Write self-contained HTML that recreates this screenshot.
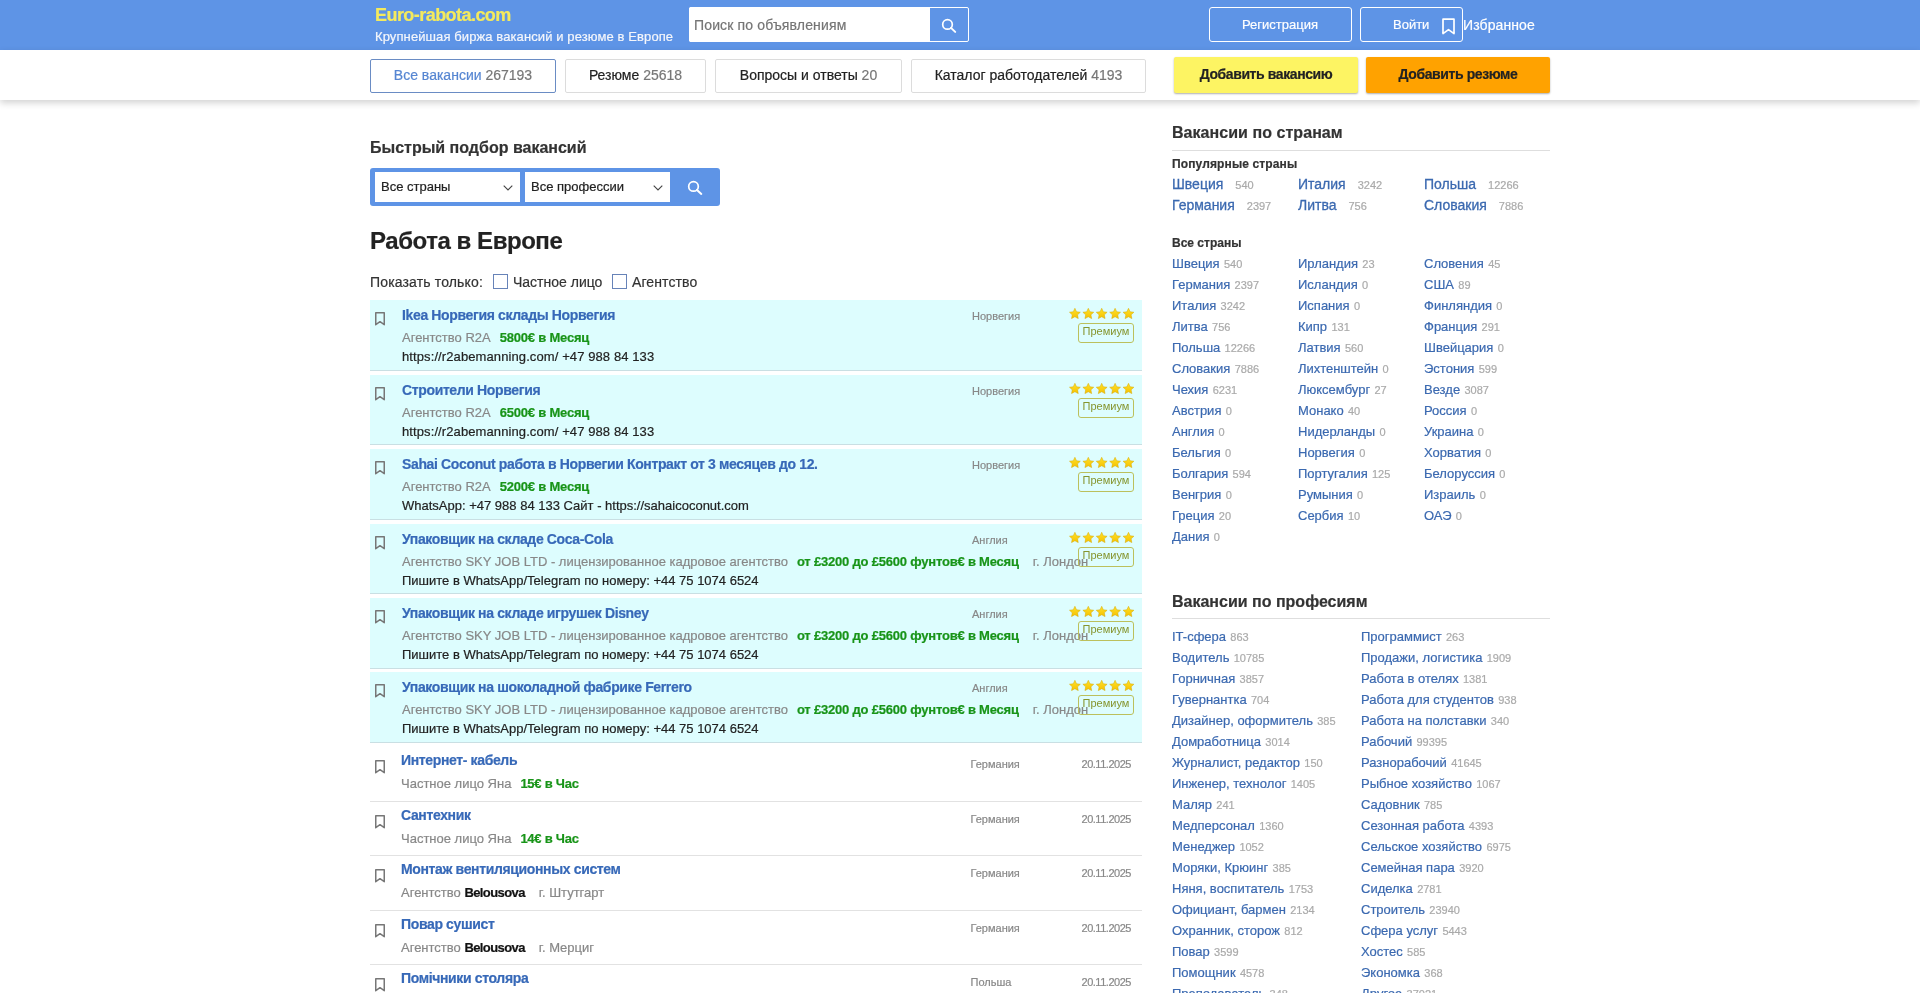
<!DOCTYPE html><html lang="ru"><head><meta charset="utf-8"><title>Euro-rabota.com</title><style>
*{box-sizing:border-box;margin:0;padding:0}
html,body{width:1920px;height:993px;overflow:hidden;background:#fff}
body{font-family:"Liberation Sans",sans-serif;color:#222;position:relative}
.t{position:absolute;white-space:nowrap;-webkit-text-stroke:0.2px currentColor}
.abs{position:absolute}
.hdr{position:absolute;left:0;top:0;width:1920px;height:50px;background:#5e94e6}
.nav{position:absolute;left:0;top:50px;width:1920px;height:50px;background:#fff;box-shadow:0 3px 7px rgba(0,0,0,.18)}
.tab{position:absolute;top:59px;height:34px;border:1px solid #dcdcdc;border-radius:2px;background:#fff}
.tab.act{border-color:#6a8cc4}
.num{color:#777}
.lnk{color:#3b69b0}
.cnt{color:#aaa}
.gr{color:#888}
.sal{color:#189418;font-weight:700}
.ttl{color:#3769b8;font-weight:700}
.prem{position:absolute;left:370px;width:772px;height:70px;background:#ddfdfe;border-bottom:1px solid #c9dfe3}
.norm{position:absolute;left:370px;width:772px;border-bottom:1px solid #e2e2e2}
.badge{position:absolute;left:1078px;width:56px;height:20px;border:1px solid #bcc05c;border-radius:3px;color:#86952e;font-size:11px;line-height:15px;text-align:center}
</style></head><body><div style="position:absolute;left:0;top:0;width:1920px;height:993px;will-change:transform"><div class="hdr"></div><div class="t " style="left:375px;top:6px;font-size:18px;line-height:18px;color:#f4ea5e;font-weight:700;letter-spacing:-0.55px">Euro-rabota.com</div><div class="t " style="left:375px;top:30px;font-size:13px;line-height:13px;color:#f4f6fb;letter-spacing:0.1px">Крупнейшая биржа вакансий и резюме в Европе</div><div class="abs" style="left:689px;top:7px;width:280px;height:35px;border:1px solid #fff;border-radius:2px;background:#5e94e6"></div><div class="abs" style="left:689px;top:7px;width:241px;height:35px;background:#fff;border-radius:2px 0 0 2px"></div><div class="t " style="left:694px;top:18px;font-size:14px;line-height:14px;color:#757575;letter-spacing:0.15px">Поиск по объявлениям</div><svg class="abs" style="left:941px;top:18px" width="16" height="16" viewBox="0 0 16 16"><circle cx="6.5" cy="6.4" r="4.8" fill="none" stroke="#fff" stroke-width="1.7"/><line x1="10" y1="9.9" x2="14.2" y2="13.9" stroke="#fff" stroke-width="2" stroke-linecap="round"/></svg><div class="abs" style="left:1209px;top:7px;width:143px;height:35px;border:1px solid #fff;border-radius:3px"></div><div class="t " style="left:1242px;top:18px;font-size:13px;line-height:13px;color:#fff">Регистрация</div><div class="abs" style="left:1360px;top:7px;width:103px;height:35px;border:1px solid #fff;border-radius:3px"></div><div class="t " style="left:1393px;top:18px;font-size:13px;line-height:13px;color:#fff">Войти</div><svg class="abs" style="left:1441px;top:18px" width="15" height="17" viewBox="0 0 15 17"><path d="M2 1.2H13V15.6L7.5 11.6L2 15.6Z" fill="none" stroke="#fff" stroke-width="1.7" stroke-linejoin="round"/></svg><div class="t " style="left:1463px;top:18px;font-size:14px;line-height:14px;color:#fff;letter-spacing:0.1px">Избранное</div><div class="nav"></div><div class="tab act" style="left:370px;width:186px"></div><div class="t" style="left:370px;top:68px;width:186px;text-align:center;font-size:14px;line-height:14px;color:#222"><span style="color:#5686d2">Все вакансии</span> <span class="num">267193</span></div><div class="tab" style="left:565px;width:141px"></div><div class="t" style="left:565px;top:68px;width:141px;text-align:center;font-size:14px;line-height:14px;color:#222">Резюме <span class="num">25618</span></div><div class="tab" style="left:715px;width:187px"></div><div class="t" style="left:715px;top:68px;width:187px;text-align:center;font-size:14px;line-height:14px;color:#222">Вопросы и ответы <span class="num">20</span></div><div class="tab" style="left:911px;width:235px"></div><div class="t" style="left:911px;top:68px;width:235px;text-align:center;font-size:14px;line-height:14px;color:#222">Каталог работодателей <span class="num">4193</span></div><div class="abs" style="left:1174px;top:57px;width:184px;height:36px;background:#fdf463;border-radius:2px;box-shadow:0 1px 2px rgba(0,0,0,.32)"></div><div class="t" style="left:1174px;top:67px;width:184px;text-align:center;font-size:14px;line-height:14px;font-weight:700;letter-spacing:-0.4px;color:#222">Добавить вакансию</div><div class="abs" style="left:1366px;top:57px;width:184px;height:36px;background:#ffa200;border-radius:2px;box-shadow:0 1px 2px rgba(0,0,0,.32)"></div><div class="t" style="left:1366px;top:67px;width:184px;text-align:center;font-size:14px;line-height:14px;font-weight:700;letter-spacing:-0.4px;color:#222">Добавить резюме</div><div class="t " style="left:370px;top:140px;font-size:16px;line-height:16px;font-weight:700;color:#333">Быстрый подбор вакансий</div><div class="abs" style="left:370px;top:168px;width:350px;height:38px;background:#5e94e6;border-radius:3px"></div><div class="abs" style="left:375px;top:172px;width:145px;height:30px;background:#fff"></div><div class="abs" style="left:525px;top:172px;width:145px;height:30px;background:#fff"></div><div class="t " style="left:381px;top:180px;font-size:13px;line-height:13px;color:#222">Все страны</div><div class="t " style="left:531px;top:180px;font-size:13px;line-height:13px;color:#222">Все профессии</div><svg class="abs" style="left:502.5px;top:184.7px" width="10" height="6" viewBox="0 0 10 6"><path d="M0.7 0.7L5 5L9.3 0.7" fill="none" stroke="#444" stroke-width="1.1"/></svg><svg class="abs" style="left:652.5px;top:184.7px" width="10" height="6" viewBox="0 0 10 6"><path d="M0.7 0.7L5 5L9.3 0.7" fill="none" stroke="#444" stroke-width="1.1"/></svg><svg class="abs" style="left:687px;top:180px" width="16" height="16" viewBox="0 0 16 16"><circle cx="6.5" cy="6.4" r="4.8" fill="none" stroke="#fff" stroke-width="1.7"/><line x1="10" y1="9.9" x2="14.3" y2="13.9" stroke="#fff" stroke-width="2" stroke-linecap="round"/></svg><div class="t " style="left:370px;top:229px;font-size:24px;line-height:24px;font-weight:700;color:#222;letter-spacing:-0.45px">Работа в Европе</div><div class="t " style="left:370px;top:274.5px;font-size:14px;line-height:14px;color:#333;letter-spacing:0.15px">Показать только:</div><div class="abs" style="left:493px;top:274px;width:15px;height:15px;border:1px solid #6783b8;background:#fff"></div><div class="t " style="left:513px;top:274.5px;font-size:14px;line-height:14px;color:#333">Частное лицо</div><div class="abs" style="left:612px;top:274px;width:15px;height:15px;border:1px solid #6783b8;background:#fff"></div><div class="t " style="left:632px;top:274.5px;font-size:14px;line-height:14px;color:#333;letter-spacing:0.1px">Агентство</div><svg width="0" height="0" style="position:absolute"><defs><linearGradient id="sg" x1="0" y1="0" x2="0" y2="1"><stop offset="0" stop-color="#ffe22a"/><stop offset="1" stop-color="#f5c000"/></linearGradient></defs></svg><div class="prem" style="top:300px;height:71px"></div><svg class="abs" style="left:374px;top:311.5px" width="12" height="15" viewBox="0 0 12 15"><path d="M1.75 0.75H10.25V12.7L6 9.7L1.75 12.7Z" fill="none" stroke="#777" stroke-width="1.5" stroke-linejoin="round"/></svg><div class="t ttl" style="left:402px;top:308px;font-size:14px;line-height:14px;letter-spacing:-0.36px">Ikea Норвегия склады Норвегия</div><div class="t" style="left:402px;top:331px;font-size:13px;line-height:13px"><span class="gr">Агентство R2A</span><span class="sal" style="margin-left:9px;letter-spacing:-0.2px">5800€ в Месяц</span></div><div class="t " style="left:402px;top:349.8px;font-size:13px;line-height:13px;color:#222;letter-spacing:0.1px">https://r2abemanning.com/ +47 988 84 133</div><div class="t gr" style="left:972px;top:311px;font-size:11px;line-height:11px;">Норвегия</div><svg class="abs" style="left:1069px;top:307.7px" width="66" height="11" viewBox="0 0 66 11"><g transform="translate(0.0,0)"><path d="M5.90 0.30L7.52 3.78L11.32 4.24L8.52 6.85L9.25 10.61L5.90 8.75L2.55 10.61L3.28 6.85L0.48 4.24L4.28 3.78Z" fill="url(#sg)" stroke="#d4a800" stroke-width="0.5" stroke-linejoin="round"/></g><g transform="translate(13.4,0)"><path d="M5.90 0.30L7.52 3.78L11.32 4.24L8.52 6.85L9.25 10.61L5.90 8.75L2.55 10.61L3.28 6.85L0.48 4.24L4.28 3.78Z" fill="url(#sg)" stroke="#d4a800" stroke-width="0.5" stroke-linejoin="round"/></g><g transform="translate(26.8,0)"><path d="M5.90 0.30L7.52 3.78L11.32 4.24L8.52 6.85L9.25 10.61L5.90 8.75L2.55 10.61L3.28 6.85L0.48 4.24L4.28 3.78Z" fill="url(#sg)" stroke="#d4a800" stroke-width="0.5" stroke-linejoin="round"/></g><g transform="translate(40.2,0)"><path d="M5.90 0.30L7.52 3.78L11.32 4.24L8.52 6.85L9.25 10.61L5.90 8.75L2.55 10.61L3.28 6.85L0.48 4.24L4.28 3.78Z" fill="url(#sg)" stroke="#d4a800" stroke-width="0.5" stroke-linejoin="round"/></g><g transform="translate(53.6,0)"><path d="M5.90 0.30L7.52 3.78L11.32 4.24L8.52 6.85L9.25 10.61L5.90 8.75L2.55 10.61L3.28 6.85L0.48 4.24L4.28 3.78Z" fill="url(#sg)" stroke="#d4a800" stroke-width="0.5" stroke-linejoin="round"/></g></svg><div class="badge" style="top:323px">Премиум</div><div class="prem" style="top:375px;height:70px"></div><svg class="abs" style="left:374px;top:386.5px" width="12" height="15" viewBox="0 0 12 15"><path d="M1.75 0.75H10.25V12.7L6 9.7L1.75 12.7Z" fill="none" stroke="#777" stroke-width="1.5" stroke-linejoin="round"/></svg><div class="t ttl" style="left:402px;top:383px;font-size:14px;line-height:14px;letter-spacing:-0.36px">Строители Норвегия</div><div class="t" style="left:402px;top:406px;font-size:13px;line-height:13px"><span class="gr">Агентство R2A</span><span class="sal" style="margin-left:9px;letter-spacing:-0.2px">6500€ в Месяц</span></div><div class="t " style="left:402px;top:424.8px;font-size:13px;line-height:13px;color:#222;letter-spacing:0.1px">https://r2abemanning.com/ +47 988 84 133</div><div class="t gr" style="left:972px;top:386px;font-size:11px;line-height:11px;">Норвегия</div><svg class="abs" style="left:1069px;top:382.7px" width="66" height="11" viewBox="0 0 66 11"><g transform="translate(0.0,0)"><path d="M5.90 0.30L7.52 3.78L11.32 4.24L8.52 6.85L9.25 10.61L5.90 8.75L2.55 10.61L3.28 6.85L0.48 4.24L4.28 3.78Z" fill="url(#sg)" stroke="#d4a800" stroke-width="0.5" stroke-linejoin="round"/></g><g transform="translate(13.4,0)"><path d="M5.90 0.30L7.52 3.78L11.32 4.24L8.52 6.85L9.25 10.61L5.90 8.75L2.55 10.61L3.28 6.85L0.48 4.24L4.28 3.78Z" fill="url(#sg)" stroke="#d4a800" stroke-width="0.5" stroke-linejoin="round"/></g><g transform="translate(26.8,0)"><path d="M5.90 0.30L7.52 3.78L11.32 4.24L8.52 6.85L9.25 10.61L5.90 8.75L2.55 10.61L3.28 6.85L0.48 4.24L4.28 3.78Z" fill="url(#sg)" stroke="#d4a800" stroke-width="0.5" stroke-linejoin="round"/></g><g transform="translate(40.2,0)"><path d="M5.90 0.30L7.52 3.78L11.32 4.24L8.52 6.85L9.25 10.61L5.90 8.75L2.55 10.61L3.28 6.85L0.48 4.24L4.28 3.78Z" fill="url(#sg)" stroke="#d4a800" stroke-width="0.5" stroke-linejoin="round"/></g><g transform="translate(53.6,0)"><path d="M5.90 0.30L7.52 3.78L11.32 4.24L8.52 6.85L9.25 10.61L5.90 8.75L2.55 10.61L3.28 6.85L0.48 4.24L4.28 3.78Z" fill="url(#sg)" stroke="#d4a800" stroke-width="0.5" stroke-linejoin="round"/></g></svg><div class="badge" style="top:398px">Премиум</div><div class="prem" style="top:449px;height:71px"></div><svg class="abs" style="left:374px;top:460.5px" width="12" height="15" viewBox="0 0 12 15"><path d="M1.75 0.75H10.25V12.7L6 9.7L1.75 12.7Z" fill="none" stroke="#777" stroke-width="1.5" stroke-linejoin="round"/></svg><div class="t ttl" style="left:402px;top:457px;font-size:14px;line-height:14px;letter-spacing:-0.36px">Sahai Coconut работа в Норвегии Контракт от 3 месяцев до 12.</div><div class="t" style="left:402px;top:480px;font-size:13px;line-height:13px"><span class="gr">Агентство R2A</span><span class="sal" style="margin-left:9px;letter-spacing:-0.2px">5200€ в Месяц</span></div><div class="t " style="left:402px;top:498.8px;font-size:13px;line-height:13px;color:#222;letter-spacing:0px">WhatsApp: +47 988 84 133 Сайт - https://sahaicoconut.com</div><div class="t gr" style="left:972px;top:460px;font-size:11px;line-height:11px;">Норвегия</div><svg class="abs" style="left:1069px;top:456.7px" width="66" height="11" viewBox="0 0 66 11"><g transform="translate(0.0,0)"><path d="M5.90 0.30L7.52 3.78L11.32 4.24L8.52 6.85L9.25 10.61L5.90 8.75L2.55 10.61L3.28 6.85L0.48 4.24L4.28 3.78Z" fill="url(#sg)" stroke="#d4a800" stroke-width="0.5" stroke-linejoin="round"/></g><g transform="translate(13.4,0)"><path d="M5.90 0.30L7.52 3.78L11.32 4.24L8.52 6.85L9.25 10.61L5.90 8.75L2.55 10.61L3.28 6.85L0.48 4.24L4.28 3.78Z" fill="url(#sg)" stroke="#d4a800" stroke-width="0.5" stroke-linejoin="round"/></g><g transform="translate(26.8,0)"><path d="M5.90 0.30L7.52 3.78L11.32 4.24L8.52 6.85L9.25 10.61L5.90 8.75L2.55 10.61L3.28 6.85L0.48 4.24L4.28 3.78Z" fill="url(#sg)" stroke="#d4a800" stroke-width="0.5" stroke-linejoin="round"/></g><g transform="translate(40.2,0)"><path d="M5.90 0.30L7.52 3.78L11.32 4.24L8.52 6.85L9.25 10.61L5.90 8.75L2.55 10.61L3.28 6.85L0.48 4.24L4.28 3.78Z" fill="url(#sg)" stroke="#d4a800" stroke-width="0.5" stroke-linejoin="round"/></g><g transform="translate(53.6,0)"><path d="M5.90 0.30L7.52 3.78L11.32 4.24L8.52 6.85L9.25 10.61L5.90 8.75L2.55 10.61L3.28 6.85L0.48 4.24L4.28 3.78Z" fill="url(#sg)" stroke="#d4a800" stroke-width="0.5" stroke-linejoin="round"/></g></svg><div class="badge" style="top:472px">Премиум</div><div class="prem" style="top:524px;height:70px"></div><svg class="abs" style="left:374px;top:535.5px" width="12" height="15" viewBox="0 0 12 15"><path d="M1.75 0.75H10.25V12.7L6 9.7L1.75 12.7Z" fill="none" stroke="#777" stroke-width="1.5" stroke-linejoin="round"/></svg><div class="t ttl" style="left:402px;top:532px;font-size:14px;line-height:14px;letter-spacing:-0.36px">Упаковщик на складе Coca-Cola</div><div class="t" style="left:402px;top:555px;font-size:13px;line-height:13px"><span class="gr">Агентство SKY JOB LTD - лицензированное кадровое агентство</span><span class="sal" style="margin-left:9px;letter-spacing:-0.2px">от £3200 до £5600 фунтов€ в Месяц</span><span class="gr" style="margin-left:14px">г. Лондон</span></div><div class="t " style="left:402px;top:573.8px;font-size:13px;line-height:13px;color:#222;letter-spacing:0px">Пишите в WhatsApp/Telegram по номеру: +44 75 1074 6524</div><div class="t gr" style="left:972px;top:535px;font-size:11px;line-height:11px;">Англия</div><svg class="abs" style="left:1069px;top:531.7px" width="66" height="11" viewBox="0 0 66 11"><g transform="translate(0.0,0)"><path d="M5.90 0.30L7.52 3.78L11.32 4.24L8.52 6.85L9.25 10.61L5.90 8.75L2.55 10.61L3.28 6.85L0.48 4.24L4.28 3.78Z" fill="url(#sg)" stroke="#d4a800" stroke-width="0.5" stroke-linejoin="round"/></g><g transform="translate(13.4,0)"><path d="M5.90 0.30L7.52 3.78L11.32 4.24L8.52 6.85L9.25 10.61L5.90 8.75L2.55 10.61L3.28 6.85L0.48 4.24L4.28 3.78Z" fill="url(#sg)" stroke="#d4a800" stroke-width="0.5" stroke-linejoin="round"/></g><g transform="translate(26.8,0)"><path d="M5.90 0.30L7.52 3.78L11.32 4.24L8.52 6.85L9.25 10.61L5.90 8.75L2.55 10.61L3.28 6.85L0.48 4.24L4.28 3.78Z" fill="url(#sg)" stroke="#d4a800" stroke-width="0.5" stroke-linejoin="round"/></g><g transform="translate(40.2,0)"><path d="M5.90 0.30L7.52 3.78L11.32 4.24L8.52 6.85L9.25 10.61L5.90 8.75L2.55 10.61L3.28 6.85L0.48 4.24L4.28 3.78Z" fill="url(#sg)" stroke="#d4a800" stroke-width="0.5" stroke-linejoin="round"/></g><g transform="translate(53.6,0)"><path d="M5.90 0.30L7.52 3.78L11.32 4.24L8.52 6.85L9.25 10.61L5.90 8.75L2.55 10.61L3.28 6.85L0.48 4.24L4.28 3.78Z" fill="url(#sg)" stroke="#d4a800" stroke-width="0.5" stroke-linejoin="round"/></g></svg><div class="badge" style="top:547px">Премиум</div><div class="prem" style="top:598px;height:71px"></div><svg class="abs" style="left:374px;top:609.5px" width="12" height="15" viewBox="0 0 12 15"><path d="M1.75 0.75H10.25V12.7L6 9.7L1.75 12.7Z" fill="none" stroke="#777" stroke-width="1.5" stroke-linejoin="round"/></svg><div class="t ttl" style="left:402px;top:606px;font-size:14px;line-height:14px;letter-spacing:-0.36px">Упаковщик на складе игрушек Disney</div><div class="t" style="left:402px;top:629px;font-size:13px;line-height:13px"><span class="gr">Агентство SKY JOB LTD - лицензированное кадровое агентство</span><span class="sal" style="margin-left:9px;letter-spacing:-0.2px">от £3200 до £5600 фунтов€ в Месяц</span><span class="gr" style="margin-left:14px">г. Лондон</span></div><div class="t " style="left:402px;top:647.8px;font-size:13px;line-height:13px;color:#222;letter-spacing:0px">Пишите в WhatsApp/Telegram по номеру: +44 75 1074 6524</div><div class="t gr" style="left:972px;top:609px;font-size:11px;line-height:11px;">Англия</div><svg class="abs" style="left:1069px;top:605.7px" width="66" height="11" viewBox="0 0 66 11"><g transform="translate(0.0,0)"><path d="M5.90 0.30L7.52 3.78L11.32 4.24L8.52 6.85L9.25 10.61L5.90 8.75L2.55 10.61L3.28 6.85L0.48 4.24L4.28 3.78Z" fill="url(#sg)" stroke="#d4a800" stroke-width="0.5" stroke-linejoin="round"/></g><g transform="translate(13.4,0)"><path d="M5.90 0.30L7.52 3.78L11.32 4.24L8.52 6.85L9.25 10.61L5.90 8.75L2.55 10.61L3.28 6.85L0.48 4.24L4.28 3.78Z" fill="url(#sg)" stroke="#d4a800" stroke-width="0.5" stroke-linejoin="round"/></g><g transform="translate(26.8,0)"><path d="M5.90 0.30L7.52 3.78L11.32 4.24L8.52 6.85L9.25 10.61L5.90 8.75L2.55 10.61L3.28 6.85L0.48 4.24L4.28 3.78Z" fill="url(#sg)" stroke="#d4a800" stroke-width="0.5" stroke-linejoin="round"/></g><g transform="translate(40.2,0)"><path d="M5.90 0.30L7.52 3.78L11.32 4.24L8.52 6.85L9.25 10.61L5.90 8.75L2.55 10.61L3.28 6.85L0.48 4.24L4.28 3.78Z" fill="url(#sg)" stroke="#d4a800" stroke-width="0.5" stroke-linejoin="round"/></g><g transform="translate(53.6,0)"><path d="M5.90 0.30L7.52 3.78L11.32 4.24L8.52 6.85L9.25 10.61L5.90 8.75L2.55 10.61L3.28 6.85L0.48 4.24L4.28 3.78Z" fill="url(#sg)" stroke="#d4a800" stroke-width="0.5" stroke-linejoin="round"/></g></svg><div class="badge" style="top:621px">Премиум</div><div class="prem" style="top:672px;height:71px"></div><svg class="abs" style="left:374px;top:683.5px" width="12" height="15" viewBox="0 0 12 15"><path d="M1.75 0.75H10.25V12.7L6 9.7L1.75 12.7Z" fill="none" stroke="#777" stroke-width="1.5" stroke-linejoin="round"/></svg><div class="t ttl" style="left:402px;top:680px;font-size:14px;line-height:14px;letter-spacing:-0.36px">Упаковщик на шоколадной фабрике Ferrero</div><div class="t" style="left:402px;top:703px;font-size:13px;line-height:13px"><span class="gr">Агентство SKY JOB LTD - лицензированное кадровое агентство</span><span class="sal" style="margin-left:9px;letter-spacing:-0.2px">от £3200 до £5600 фунтов€ в Месяц</span><span class="gr" style="margin-left:14px">г. Лондон</span></div><div class="t " style="left:402px;top:721.8px;font-size:13px;line-height:13px;color:#222;letter-spacing:0px">Пишите в WhatsApp/Telegram по номеру: +44 75 1074 6524</div><div class="t gr" style="left:972px;top:683px;font-size:11px;line-height:11px;">Англия</div><svg class="abs" style="left:1069px;top:679.7px" width="66" height="11" viewBox="0 0 66 11"><g transform="translate(0.0,0)"><path d="M5.90 0.30L7.52 3.78L11.32 4.24L8.52 6.85L9.25 10.61L5.90 8.75L2.55 10.61L3.28 6.85L0.48 4.24L4.28 3.78Z" fill="url(#sg)" stroke="#d4a800" stroke-width="0.5" stroke-linejoin="round"/></g><g transform="translate(13.4,0)"><path d="M5.90 0.30L7.52 3.78L11.32 4.24L8.52 6.85L9.25 10.61L5.90 8.75L2.55 10.61L3.28 6.85L0.48 4.24L4.28 3.78Z" fill="url(#sg)" stroke="#d4a800" stroke-width="0.5" stroke-linejoin="round"/></g><g transform="translate(26.8,0)"><path d="M5.90 0.30L7.52 3.78L11.32 4.24L8.52 6.85L9.25 10.61L5.90 8.75L2.55 10.61L3.28 6.85L0.48 4.24L4.28 3.78Z" fill="url(#sg)" stroke="#d4a800" stroke-width="0.5" stroke-linejoin="round"/></g><g transform="translate(40.2,0)"><path d="M5.90 0.30L7.52 3.78L11.32 4.24L8.52 6.85L9.25 10.61L5.90 8.75L2.55 10.61L3.28 6.85L0.48 4.24L4.28 3.78Z" fill="url(#sg)" stroke="#d4a800" stroke-width="0.5" stroke-linejoin="round"/></g><g transform="translate(53.6,0)"><path d="M5.90 0.30L7.52 3.78L11.32 4.24L8.52 6.85L9.25 10.61L5.90 8.75L2.55 10.61L3.28 6.85L0.48 4.24L4.28 3.78Z" fill="url(#sg)" stroke="#d4a800" stroke-width="0.5" stroke-linejoin="round"/></g></svg><div class="badge" style="top:695px">Премиум</div><div class="norm" style="top:747px;height:55px"></div><svg class="abs" style="left:374px;top:759.5px" width="12" height="15" viewBox="0 0 12 15"><path d="M1.75 0.75H10.25V12.7L6 9.7L1.75 12.7Z" fill="none" stroke="#777" stroke-width="1.5" stroke-linejoin="round"/></svg><div class="t ttl" style="left:401px;top:752.9px;font-size:14px;line-height:14px;letter-spacing:-0.36px">Интернет- кабель</div><div class="t" style="left:401px;top:777px;font-size:13px;line-height:13px"><span class="gr">Частное лицо Яна</span><span class="sal" style="margin-left:9px;letter-spacing:-0.25px">15€ в Час</span></div><div class="t gr" style="left:970.5px;top:758.8px;font-size:11px;line-height:11px;">Германия</div><div class="t gr" style="left:1081.5px;top:758.8px;font-size:11px;line-height:11px;letter-spacing:-0.48px">20.11.2025</div><div class="norm" style="top:802px;height:54px"></div><svg class="abs" style="left:374px;top:814.5px" width="12" height="15" viewBox="0 0 12 15"><path d="M1.75 0.75H10.25V12.7L6 9.7L1.75 12.7Z" fill="none" stroke="#777" stroke-width="1.5" stroke-linejoin="round"/></svg><div class="t ttl" style="left:401px;top:807.9px;font-size:14px;line-height:14px;letter-spacing:-0.36px">Сантехник</div><div class="t" style="left:401px;top:832px;font-size:13px;line-height:13px"><span class="gr">Частное лицо Яна</span><span class="sal" style="margin-left:9px;letter-spacing:-0.25px">14€ в Час</span></div><div class="t gr" style="left:970.5px;top:813.8px;font-size:11px;line-height:11px;">Германия</div><div class="t gr" style="left:1081.5px;top:813.8px;font-size:11px;line-height:11px;letter-spacing:-0.48px">20.11.2025</div><div class="norm" style="top:856px;height:55px"></div><svg class="abs" style="left:374px;top:868.5px" width="12" height="15" viewBox="0 0 12 15"><path d="M1.75 0.75H10.25V12.7L6 9.7L1.75 12.7Z" fill="none" stroke="#777" stroke-width="1.5" stroke-linejoin="round"/></svg><div class="t ttl" style="left:401px;top:861.9px;font-size:14px;line-height:14px;letter-spacing:-0.36px">Монтаж вентиляционных систем</div><div class="t" style="left:401px;top:886px;font-size:13px;line-height:13px"><span class="gr">Агентство</span> <b style="color:#111;letter-spacing:-0.6px">Belousova</b><span class="gr" style="margin-left:14px">г. Штутгарт</span></div><div class="t gr" style="left:970.5px;top:867.8px;font-size:11px;line-height:11px;">Германия</div><div class="t gr" style="left:1081.5px;top:867.8px;font-size:11px;line-height:11px;letter-spacing:-0.48px">20.11.2025</div><div class="norm" style="top:911px;height:54px"></div><svg class="abs" style="left:374px;top:923.5px" width="12" height="15" viewBox="0 0 12 15"><path d="M1.75 0.75H10.25V12.7L6 9.7L1.75 12.7Z" fill="none" stroke="#777" stroke-width="1.5" stroke-linejoin="round"/></svg><div class="t ttl" style="left:401px;top:916.9px;font-size:14px;line-height:14px;letter-spacing:-0.36px">Повар сушист</div><div class="t" style="left:401px;top:941px;font-size:13px;line-height:13px"><span class="gr">Агентство</span> <b style="color:#111;letter-spacing:-0.6px">Belousova</b><span class="gr" style="margin-left:14px">г. Мерциг</span></div><div class="t gr" style="left:970.5px;top:922.8px;font-size:11px;line-height:11px;">Германия</div><div class="t gr" style="left:1081.5px;top:922.8px;font-size:11px;line-height:11px;letter-spacing:-0.48px">20.11.2025</div><div class="norm" style="top:965px;height:55px"></div><svg class="abs" style="left:374px;top:977.5px" width="12" height="15" viewBox="0 0 12 15"><path d="M1.75 0.75H10.25V12.7L6 9.7L1.75 12.7Z" fill="none" stroke="#777" stroke-width="1.5" stroke-linejoin="round"/></svg><div class="t ttl" style="left:401px;top:970.9px;font-size:14px;line-height:14px;letter-spacing:-0.36px">Помічники столяра</div><div class="t gr" style="left:970.5px;top:976.8px;font-size:11px;line-height:11px;">Польша</div><div class="t gr" style="left:1081.5px;top:976.8px;font-size:11px;line-height:11px;letter-spacing:-0.48px">20.11.2025</div><div class="t " style="left:1172px;top:125px;font-size:16px;line-height:16px;font-weight:700;color:#333;letter-spacing:0.05px">Вакансии по странам</div><div class="abs" style="left:1172px;top:150px;width:378px;height:1px;background:#dedede"></div><div class="t " style="left:1172px;top:158px;font-size:12px;line-height:12px;font-weight:700;color:#333;letter-spacing:0.12px">Популярные страны</div><div class="t" style="left:1172px;top:176.6px;font-size:14px;line-height:14px"><span class="lnk" style="-webkit-text-stroke:0.3px #3b69b0">Швеция</span><span class="cnt" style="font-size:11px;margin-left:12px">540</span></div><div class="t" style="left:1298px;top:176.6px;font-size:14px;line-height:14px"><span class="lnk" style="-webkit-text-stroke:0.3px #3b69b0">Италия</span><span class="cnt" style="font-size:11px;margin-left:12px">3242</span></div><div class="t" style="left:1424px;top:176.6px;font-size:14px;line-height:14px"><span class="lnk" style="-webkit-text-stroke:0.3px #3b69b0">Польша</span><span class="cnt" style="font-size:11px;margin-left:12px">12266</span></div><div class="t" style="left:1172px;top:197.9px;font-size:14px;line-height:14px"><span class="lnk" style="-webkit-text-stroke:0.3px #3b69b0">Германия</span><span class="cnt" style="font-size:11px;margin-left:12px">2397</span></div><div class="t" style="left:1298px;top:197.9px;font-size:14px;line-height:14px"><span class="lnk" style="-webkit-text-stroke:0.3px #3b69b0">Литва</span><span class="cnt" style="font-size:11px;margin-left:12px">756</span></div><div class="t" style="left:1424px;top:197.9px;font-size:14px;line-height:14px"><span class="lnk" style="-webkit-text-stroke:0.3px #3b69b0">Словакия</span><span class="cnt" style="font-size:11px;margin-left:12px">7886</span></div><div class="t " style="left:1172px;top:237px;font-size:12px;line-height:12px;font-weight:700;color:#333">Все страны</div><div class="t" style="left:1172px;top:257px;font-size:13px;line-height:13px"><span class="lnk" style="">Швеция</span><span class="cnt" style="font-size:11px;margin-left:4.3px">540</span></div><div class="t" style="left:1172px;top:278px;font-size:13px;line-height:13px"><span class="lnk" style="">Германия</span><span class="cnt" style="font-size:11px;margin-left:4.3px">2397</span></div><div class="t" style="left:1172px;top:299px;font-size:13px;line-height:13px"><span class="lnk" style="">Италия</span><span class="cnt" style="font-size:11px;margin-left:4.3px">3242</span></div><div class="t" style="left:1172px;top:320px;font-size:13px;line-height:13px"><span class="lnk" style="">Литва</span><span class="cnt" style="font-size:11px;margin-left:4.3px">756</span></div><div class="t" style="left:1172px;top:341px;font-size:13px;line-height:13px"><span class="lnk" style="">Польша</span><span class="cnt" style="font-size:11px;margin-left:4.3px">12266</span></div><div class="t" style="left:1172px;top:362px;font-size:13px;line-height:13px"><span class="lnk" style="">Словакия</span><span class="cnt" style="font-size:11px;margin-left:4.3px">7886</span></div><div class="t" style="left:1172px;top:383px;font-size:13px;line-height:13px"><span class="lnk" style="">Чехия</span><span class="cnt" style="font-size:11px;margin-left:4.3px">6231</span></div><div class="t" style="left:1172px;top:404px;font-size:13px;line-height:13px"><span class="lnk" style="">Австрия</span><span class="cnt" style="font-size:11px;margin-left:4.3px">0</span></div><div class="t" style="left:1172px;top:425px;font-size:13px;line-height:13px"><span class="lnk" style="">Англия</span><span class="cnt" style="font-size:11px;margin-left:4.3px">0</span></div><div class="t" style="left:1172px;top:446px;font-size:13px;line-height:13px"><span class="lnk" style="">Бельгия</span><span class="cnt" style="font-size:11px;margin-left:4.3px">0</span></div><div class="t" style="left:1172px;top:467px;font-size:13px;line-height:13px"><span class="lnk" style="">Болгария</span><span class="cnt" style="font-size:11px;margin-left:4.3px">594</span></div><div class="t" style="left:1172px;top:488px;font-size:13px;line-height:13px"><span class="lnk" style="">Венгрия</span><span class="cnt" style="font-size:11px;margin-left:4.3px">0</span></div><div class="t" style="left:1172px;top:509px;font-size:13px;line-height:13px"><span class="lnk" style="">Греция</span><span class="cnt" style="font-size:11px;margin-left:4.3px">20</span></div><div class="t" style="left:1172px;top:530px;font-size:13px;line-height:13px"><span class="lnk" style="">Дания</span><span class="cnt" style="font-size:11px;margin-left:4.3px">0</span></div><div class="t" style="left:1298px;top:257px;font-size:13px;line-height:13px"><span class="lnk" style="">Ирландия</span><span class="cnt" style="font-size:11px;margin-left:4.3px">23</span></div><div class="t" style="left:1298px;top:278px;font-size:13px;line-height:13px"><span class="lnk" style="">Исландия</span><span class="cnt" style="font-size:11px;margin-left:4.3px">0</span></div><div class="t" style="left:1298px;top:299px;font-size:13px;line-height:13px"><span class="lnk" style="">Испания</span><span class="cnt" style="font-size:11px;margin-left:4.3px">0</span></div><div class="t" style="left:1298px;top:320px;font-size:13px;line-height:13px"><span class="lnk" style="">Кипр</span><span class="cnt" style="font-size:11px;margin-left:4.3px">131</span></div><div class="t" style="left:1298px;top:341px;font-size:13px;line-height:13px"><span class="lnk" style="">Латвия</span><span class="cnt" style="font-size:11px;margin-left:4.3px">560</span></div><div class="t" style="left:1298px;top:362px;font-size:13px;line-height:13px"><span class="lnk" style="">Лихтенштейн</span><span class="cnt" style="font-size:11px;margin-left:4.3px">0</span></div><div class="t" style="left:1298px;top:383px;font-size:13px;line-height:13px"><span class="lnk" style="">Люксембург</span><span class="cnt" style="font-size:11px;margin-left:4.3px">27</span></div><div class="t" style="left:1298px;top:404px;font-size:13px;line-height:13px"><span class="lnk" style="">Монако</span><span class="cnt" style="font-size:11px;margin-left:4.3px">40</span></div><div class="t" style="left:1298px;top:425px;font-size:13px;line-height:13px"><span class="lnk" style="">Нидерланды</span><span class="cnt" style="font-size:11px;margin-left:4.3px">0</span></div><div class="t" style="left:1298px;top:446px;font-size:13px;line-height:13px"><span class="lnk" style="">Норвегия</span><span class="cnt" style="font-size:11px;margin-left:4.3px">0</span></div><div class="t" style="left:1298px;top:467px;font-size:13px;line-height:13px"><span class="lnk" style="">Португалия</span><span class="cnt" style="font-size:11px;margin-left:4.3px">125</span></div><div class="t" style="left:1298px;top:488px;font-size:13px;line-height:13px"><span class="lnk" style="">Румыния</span><span class="cnt" style="font-size:11px;margin-left:4.3px">0</span></div><div class="t" style="left:1298px;top:509px;font-size:13px;line-height:13px"><span class="lnk" style="">Сербия</span><span class="cnt" style="font-size:11px;margin-left:4.3px">10</span></div><div class="t" style="left:1424px;top:257px;font-size:13px;line-height:13px"><span class="lnk" style="">Словения</span><span class="cnt" style="font-size:11px;margin-left:4.3px">45</span></div><div class="t" style="left:1424px;top:278px;font-size:13px;line-height:13px"><span class="lnk" style="">США</span><span class="cnt" style="font-size:11px;margin-left:4.3px">89</span></div><div class="t" style="left:1424px;top:299px;font-size:13px;line-height:13px"><span class="lnk" style="">Финляндия</span><span class="cnt" style="font-size:11px;margin-left:4.3px">0</span></div><div class="t" style="left:1424px;top:320px;font-size:13px;line-height:13px"><span class="lnk" style="">Франция</span><span class="cnt" style="font-size:11px;margin-left:4.3px">291</span></div><div class="t" style="left:1424px;top:341px;font-size:13px;line-height:13px"><span class="lnk" style="">Швейцария</span><span class="cnt" style="font-size:11px;margin-left:4.3px">0</span></div><div class="t" style="left:1424px;top:362px;font-size:13px;line-height:13px"><span class="lnk" style="">Эстония</span><span class="cnt" style="font-size:11px;margin-left:4.3px">599</span></div><div class="t" style="left:1424px;top:383px;font-size:13px;line-height:13px"><span class="lnk" style="">Везде</span><span class="cnt" style="font-size:11px;margin-left:4.3px">3087</span></div><div class="t" style="left:1424px;top:404px;font-size:13px;line-height:13px"><span class="lnk" style="">Россия</span><span class="cnt" style="font-size:11px;margin-left:4.3px">0</span></div><div class="t" style="left:1424px;top:425px;font-size:13px;line-height:13px"><span class="lnk" style="">Украина</span><span class="cnt" style="font-size:11px;margin-left:4.3px">0</span></div><div class="t" style="left:1424px;top:446px;font-size:13px;line-height:13px"><span class="lnk" style="">Хорватия</span><span class="cnt" style="font-size:11px;margin-left:4.3px">0</span></div><div class="t" style="left:1424px;top:467px;font-size:13px;line-height:13px"><span class="lnk" style="">Белоруссия</span><span class="cnt" style="font-size:11px;margin-left:4.3px">0</span></div><div class="t" style="left:1424px;top:488px;font-size:13px;line-height:13px"><span class="lnk" style="">Израиль</span><span class="cnt" style="font-size:11px;margin-left:4.3px">0</span></div><div class="t" style="left:1424px;top:509px;font-size:13px;line-height:13px"><span class="lnk" style="">ОАЭ</span><span class="cnt" style="font-size:11px;margin-left:4.3px">0</span></div><div class="t " style="left:1172px;top:594px;font-size:16px;line-height:16px;font-weight:700;color:#333">Вакансии по професиям</div><div class="abs" style="left:1172px;top:618px;width:378px;height:1px;background:#dedede"></div><div class="t" style="left:1172px;top:630px;font-size:13px;line-height:13px"><span class="lnk" style="">IT-сфера</span><span class="cnt" style="font-size:11px;margin-left:4.3px">863</span></div><div class="t" style="left:1172px;top:651px;font-size:13px;line-height:13px"><span class="lnk" style="">Водитель</span><span class="cnt" style="font-size:11px;margin-left:4.3px">10785</span></div><div class="t" style="left:1172px;top:672px;font-size:13px;line-height:13px"><span class="lnk" style="">Горничная</span><span class="cnt" style="font-size:11px;margin-left:4.3px">3857</span></div><div class="t" style="left:1172px;top:693px;font-size:13px;line-height:13px"><span class="lnk" style="">Гувернантка</span><span class="cnt" style="font-size:11px;margin-left:4.3px">704</span></div><div class="t" style="left:1172px;top:714px;font-size:13px;line-height:13px"><span class="lnk" style="">Дизайнер, оформитель</span><span class="cnt" style="font-size:11px;margin-left:4.3px">385</span></div><div class="t" style="left:1172px;top:735px;font-size:13px;line-height:13px"><span class="lnk" style="">Домработница</span><span class="cnt" style="font-size:11px;margin-left:4.3px">3014</span></div><div class="t" style="left:1172px;top:756px;font-size:13px;line-height:13px"><span class="lnk" style="">Журналист, редактор</span><span class="cnt" style="font-size:11px;margin-left:4.3px">150</span></div><div class="t" style="left:1172px;top:777px;font-size:13px;line-height:13px"><span class="lnk" style="">Инженер, технолог</span><span class="cnt" style="font-size:11px;margin-left:4.3px">1405</span></div><div class="t" style="left:1172px;top:798px;font-size:13px;line-height:13px"><span class="lnk" style="">Маляр</span><span class="cnt" style="font-size:11px;margin-left:4.3px">241</span></div><div class="t" style="left:1172px;top:819px;font-size:13px;line-height:13px"><span class="lnk" style="">Медперсонал</span><span class="cnt" style="font-size:11px;margin-left:4.3px">1360</span></div><div class="t" style="left:1172px;top:840px;font-size:13px;line-height:13px"><span class="lnk" style="">Менеджер</span><span class="cnt" style="font-size:11px;margin-left:4.3px">1052</span></div><div class="t" style="left:1172px;top:861px;font-size:13px;line-height:13px"><span class="lnk" style="">Моряки, Крюинг</span><span class="cnt" style="font-size:11px;margin-left:4.3px">385</span></div><div class="t" style="left:1172px;top:882px;font-size:13px;line-height:13px"><span class="lnk" style="">Няня, воспитатель</span><span class="cnt" style="font-size:11px;margin-left:4.3px">1753</span></div><div class="t" style="left:1172px;top:903px;font-size:13px;line-height:13px"><span class="lnk" style="">Официант, бармен</span><span class="cnt" style="font-size:11px;margin-left:4.3px">2134</span></div><div class="t" style="left:1172px;top:924px;font-size:13px;line-height:13px"><span class="lnk" style="">Охранник, сторож</span><span class="cnt" style="font-size:11px;margin-left:4.3px">812</span></div><div class="t" style="left:1172px;top:945px;font-size:13px;line-height:13px"><span class="lnk" style="">Повар</span><span class="cnt" style="font-size:11px;margin-left:4.3px">3599</span></div><div class="t" style="left:1172px;top:966px;font-size:13px;line-height:13px"><span class="lnk" style="">Помощник</span><span class="cnt" style="font-size:11px;margin-left:4.3px">4578</span></div><div class="t" style="left:1172px;top:987px;font-size:13px;line-height:13px"><span class="lnk" style="">Преподаватель</span><span class="cnt" style="font-size:11px;margin-left:4.3px">348</span></div><div class="t" style="left:1361px;top:630px;font-size:13px;line-height:13px"><span class="lnk" style="">Программист</span><span class="cnt" style="font-size:11px;margin-left:4.3px">263</span></div><div class="t" style="left:1361px;top:651px;font-size:13px;line-height:13px"><span class="lnk" style="">Продажи, логистика</span><span class="cnt" style="font-size:11px;margin-left:4.3px">1909</span></div><div class="t" style="left:1361px;top:672px;font-size:13px;line-height:13px"><span class="lnk" style="">Работа в отелях</span><span class="cnt" style="font-size:11px;margin-left:4.3px">1381</span></div><div class="t" style="left:1361px;top:693px;font-size:13px;line-height:13px"><span class="lnk" style="">Работа для студентов</span><span class="cnt" style="font-size:11px;margin-left:4.3px">938</span></div><div class="t" style="left:1361px;top:714px;font-size:13px;line-height:13px"><span class="lnk" style="">Работа на полставки</span><span class="cnt" style="font-size:11px;margin-left:4.3px">340</span></div><div class="t" style="left:1361px;top:735px;font-size:13px;line-height:13px"><span class="lnk" style="">Рабочий</span><span class="cnt" style="font-size:11px;margin-left:4.3px">99395</span></div><div class="t" style="left:1361px;top:756px;font-size:13px;line-height:13px"><span class="lnk" style="">Разнорабочий</span><span class="cnt" style="font-size:11px;margin-left:4.3px">41645</span></div><div class="t" style="left:1361px;top:777px;font-size:13px;line-height:13px"><span class="lnk" style="">Рыбное хозяйство</span><span class="cnt" style="font-size:11px;margin-left:4.3px">1067</span></div><div class="t" style="left:1361px;top:798px;font-size:13px;line-height:13px"><span class="lnk" style="">Садовник</span><span class="cnt" style="font-size:11px;margin-left:4.3px">785</span></div><div class="t" style="left:1361px;top:819px;font-size:13px;line-height:13px"><span class="lnk" style="">Сезонная работа</span><span class="cnt" style="font-size:11px;margin-left:4.3px">4393</span></div><div class="t" style="left:1361px;top:840px;font-size:13px;line-height:13px"><span class="lnk" style="">Сельское хозяйство</span><span class="cnt" style="font-size:11px;margin-left:4.3px">6975</span></div><div class="t" style="left:1361px;top:861px;font-size:13px;line-height:13px"><span class="lnk" style="">Семейная пара</span><span class="cnt" style="font-size:11px;margin-left:4.3px">3920</span></div><div class="t" style="left:1361px;top:882px;font-size:13px;line-height:13px"><span class="lnk" style="">Сиделка</span><span class="cnt" style="font-size:11px;margin-left:4.3px">2781</span></div><div class="t" style="left:1361px;top:903px;font-size:13px;line-height:13px"><span class="lnk" style="">Строитель</span><span class="cnt" style="font-size:11px;margin-left:4.3px">23940</span></div><div class="t" style="left:1361px;top:924px;font-size:13px;line-height:13px"><span class="lnk" style="">Сфера услуг</span><span class="cnt" style="font-size:11px;margin-left:4.3px">5443</span></div><div class="t" style="left:1361px;top:945px;font-size:13px;line-height:13px"><span class="lnk" style="">Хостес</span><span class="cnt" style="font-size:11px;margin-left:4.3px">585</span></div><div class="t" style="left:1361px;top:966px;font-size:13px;line-height:13px"><span class="lnk" style="">Экономка</span><span class="cnt" style="font-size:11px;margin-left:4.3px">368</span></div><div class="t" style="left:1361px;top:987px;font-size:13px;line-height:13px"><span class="lnk" style="">Другое</span><span class="cnt" style="font-size:11px;margin-left:4.3px">37021</span></div></div></body></html>
